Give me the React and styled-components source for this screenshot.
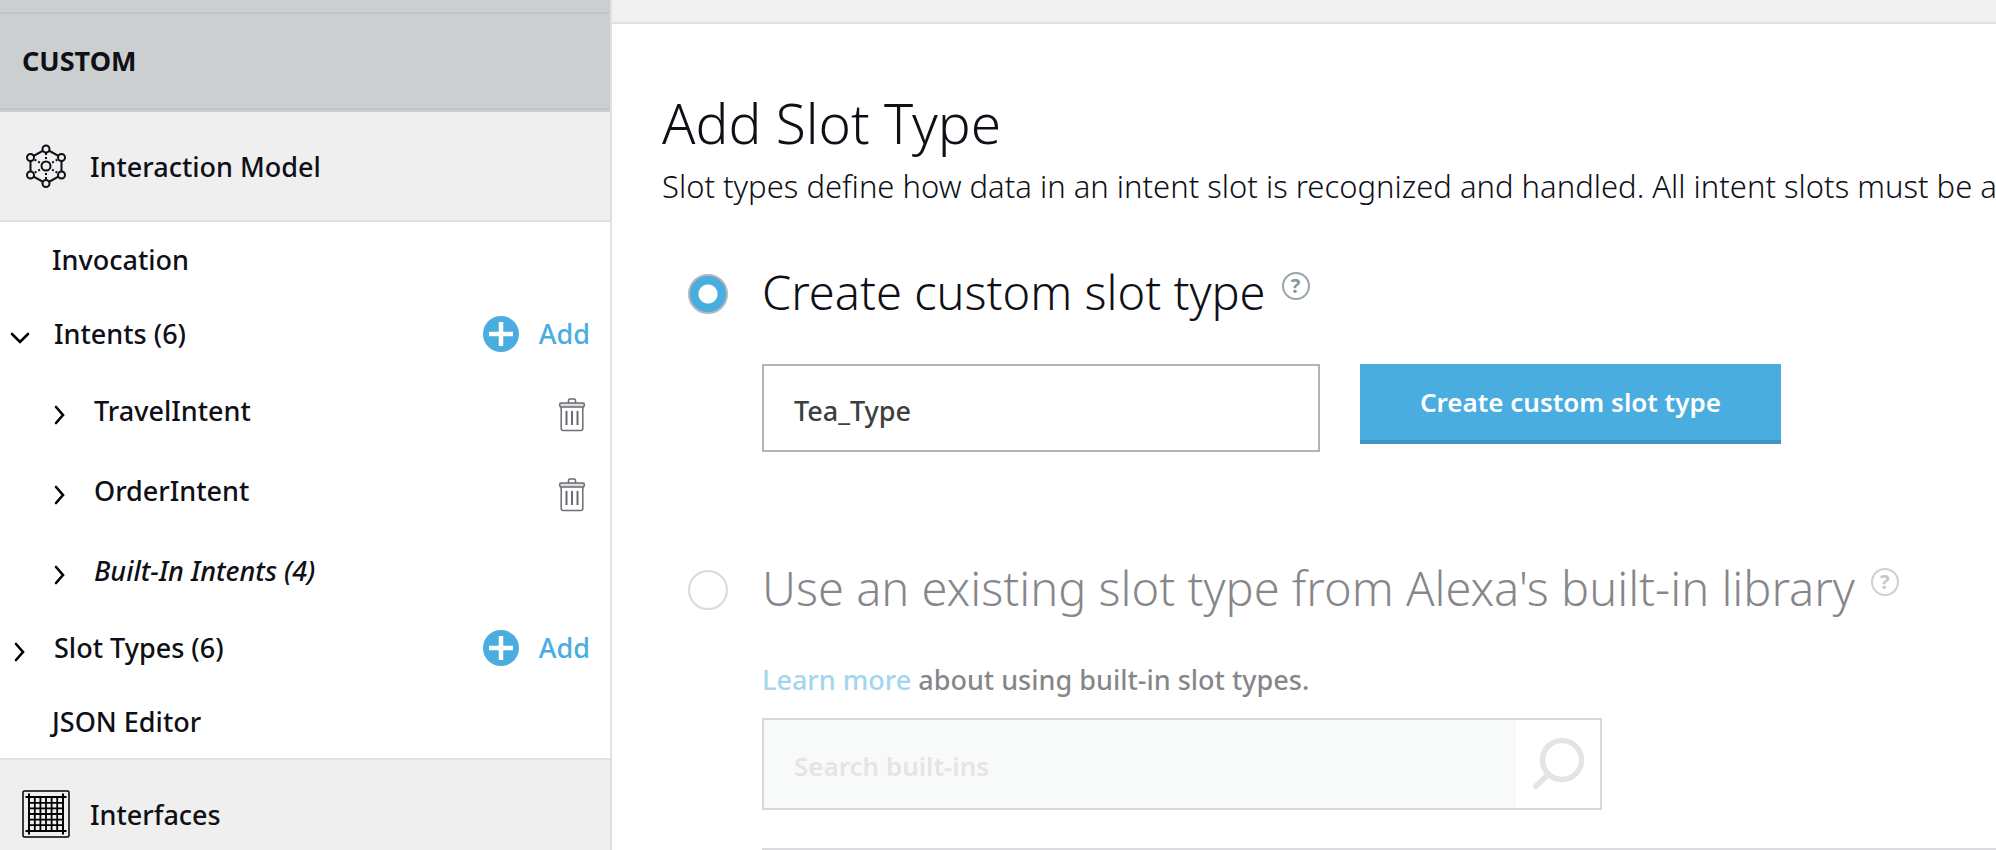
import React, { useState } from "react";
import styled, { createGlobalStyle } from "styled-components";

const blue = "#4aade0";
const ink = "#0f1017";

const GlobalStyle = createGlobalStyle`
  * { box-sizing: border-box; }
  body {
    margin: 0;
    background: #fff;
    color: ${ink};
    font-family: "Noto Sans", "Open Sans", sans-serif;
    font-size: 27px;
    font-weight: 500;
    line-height: 40px;
  }
  button, input { font: inherit; color: inherit; }
  svg { display: block; }
`;

const Page = styled.div`
  display: flex;
  height: 100vh;
  overflow: hidden;
`;

const Sidebar = styled.nav`
  flex: 0 0 612px;
  border-right: 2px solid #e0e0e0;
`;

const SidebarCap = styled.div`
  height: 14px;
  background: #cbcfcf;
  border-bottom: 2px solid #c5c3c6;
`;

const SkillType = styled.div`
  display: flex;
  align-items: center;
  height: 96px;
  padding-left: 22px;
  background: #cbcfcf;
  border-bottom: 2px solid #c5c3c6;
  box-shadow: 0 2px 0 #cbcfcf;
  position: relative;
  font-weight: 700;
`;

const Section = styled.a`
  display: flex;
  align-items: center;
  height: ${(p) => (p.$first ? 112 : 110)}px;
  padding: ${(p) => (p.$first ? "2px" : "0")} 22px 0;
  gap: 20px;
  background: #efefef;
  border: solid #e0e0e0;
  border-width: ${(p) => (p.$first ? "0 0 2px" : "2px 0 0")};
  color: inherit;
  text-decoration: none;
`;

const SectionLabel = styled.span`
  padding-top: 2px;
`;

const IconSlot = styled.span`
  display: flex;
  justify-content: center;
  width: 48px;
`;

const Tree = styled.ul`
  margin: 0;
  padding: 0;
  list-style: none;
`;

const Row = styled.div`
  display: flex;
  align-items: center;
  height: ${(p) => (p.$nested ? 80 : 74)}px;
  padding: 2px 20px 0 ${(p) => (p.$nested ? 40 : 0)}px;
`;

const Toggle = styled.button`
  display: flex;
  justify-content: center;
  width: 40px;
  margin: 8px 14px 0 0;
  padding: 0;
  border: 0;
  background: none;
`;

const RowLink = styled.a`
  flex: 1;
  padding-left: ${(p) => (p.$plain ? 52 : 0)}px;
  color: inherit;
  font-style: ${(p) => (p.$italic ? "italic" : "normal")};
  text-decoration: none;
`;

const AddButton = styled.button`
  display: flex;
  align-items: center;
  gap: 20px;
  padding: 0;
  border: 0;
  background: none;
  color: ${blue};
`;

const DeleteButton = styled.button`
  margin: 8px 5px 0 0;
  padding: 0;
  border: 0;
  background: none;
`;

const Main = styled.main`
  flex: 1;
  min-width: 0;
  overflow: hidden;
`;

const TopStrip = styled.div`
  height: 24px;
  background: #f1f1f1;
  border-bottom: 2px solid #e0e0e0;
`;

const Content = styled.div`
  padding: 66px 0 0 50px;
`;

const Title = styled.h1`
  margin: 0;
  font-size: 55px;
  font-weight: 300;
  line-height: 66px;
`;

const Intro = styled.p`
  margin: 8px 0 54px;
  font-size: 31px;
  font-weight: 300;
  line-height: 44px;
  white-space: nowrap;
`;

const Option = styled.section`
  margin-bottom: 106px;
  padding-left: 26px;
  opacity: ${(p) => (p.$dim ? 0.5 : 1)};
`;

const OptionHead = styled.div`
  display: flex;
  align-items: center;
  height: 60px;
`;

const Radio = styled.input`
  appearance: none;
  flex: none;
  width: 40px;
  height: 40px;
  margin: 4px 34px 0 0;
  border: 2px solid #b4b6bb;
  border-radius: 50%;
  background: #fff;
  &:checked {
    background: radial-gradient(circle, #fff 9px, ${blue} 10px);
  }
`;

const OptionTitle = styled.h2`
  margin: 0;
  font-size: 47px;
  font-weight: 300;
  line-height: 60px;
  white-space: nowrap;
`;

const Help = styled.button`
  align-self: flex-start;
  width: 28px;
  height: 28px;
  margin: 10px 0 0 16px;
  padding: 0;
  border: 2px solid #9aa5a5;
  border-radius: 50%;
  background: none;
  color: #879596;
  font-size: 20px;
  font-weight: 700;
  line-height: 24px;
`;

const OptionBody = styled.div`
  padding: 42px 0 0 74px;
`;

const Fields = styled.div`
  display: flex;
  align-items: flex-start;
  gap: 40px;
`;

const NameInput = styled.input`
  width: 558px;
  height: 88px;
  padding: 4px 30px 0;
  border: 2px solid #aab7b8;
  border-radius: 0;
  background: #fff;
  color: #3a3f40;
`;

const CreateButton = styled.button`
  height: 80px;
  padding: 0 60px;
  border: 0;
  border-bottom: 4px solid #4293bf;
  background: ${blue};
  color: #fff;
  font-size: 26px;
  font-weight: 600;
`;

const Hint = styled.p`
  margin: 0 0 18px;
`;

const HintLink = styled.a`
  color: ${blue};
  text-decoration: none;
`;

const SearchBox = styled.div`
  display: flex;
  max-width: 840px;
  height: 92px;
  margin-bottom: 38px;
  border: 2px solid #aab7b8;
`;

const SearchInput = styled.input`
  flex: 1;
  padding: 4px 30px 0;
  border: 0;
  background: #f3f6f6;
  &::placeholder {
    color: #cbcbcb;
    font-weight: 600;
    font-size: 26px;
    opacity: 1;
  }
`;

const SearchButton = styled.button`
  display: flex;
  align-items: center;
  justify-content: center;
  width: 84px;
  padding: 0;
  border: 0;
  background: #fff;
`;

const Results = styled.div`
  height: 200px;
  border-top: 2px solid #b9b9c0;
`;

function Chevron({ open }) {
  return (
    <svg width="20" height="20" viewBox="0 0 20 20" fill="none" stroke="#000" strokeWidth="2.6">
      <path d={open ? "M2 6l8 8 8-8" : "M6 2l7 8-7 8"} strokeLinecap="round" strokeLinejoin="miter" />
    </svg>
  );
}

function PlusIcon() {
  return (
    <svg width="36" height="36" viewBox="0 0 36 36">
      <circle cx="18" cy="18" r="18" fill={blue} />
      <path d="M18 6v24M6 18h24" stroke="#fff" strokeWidth="4.5" />
    </svg>
  );
}

function TrashIcon() {
  return (
    <svg width="26" height="34" viewBox="0 0 26 34" fill="none" stroke="#6b6b73" strokeWidth="1.5">
      <path d="M9.5 5V2.2Q9.5 1 10.7 1H15.3Q16.5 1 16.5 2.2V5" />
      <rect x="0.8" y="5" width="24.4" height="4" rx="1" fill="#dcdce0" />
      <path d="M2.2 9V30.5Q2.2 32.5 4.2 32.5H21.8Q23.8 32.5 23.8 30.5V9" />
      <path d="M7.5 13v14M13 13v14M18.5 13v14" strokeWidth="2" />
    </svg>
  );
}

const nodes = [[20, 5], [35.5, 13.5], [35.5, 31], [20, 39.5], [4.5, 31], [4.5, 13.5]];

function ModelIcon() {
  return (
    <svg width="40" height="44" viewBox="0 0 40 44" fill="none" stroke={ink} strokeWidth="2">
      <path d={"M" + nodes.map((n) => n.join(" ")).join("L") + "Z"} />
      {nodes.map(([x, y]) => (
        <path key={x + "-" + y} d={`M20 22L${x} ${y}`} strokeDasharray="2 2" strokeDashoffset="1" />
      ))}
      {nodes.map(([x, y]) => (
        <circle key={x + "-" + y} cx={x} cy={y} r="3.5" fill="#efefef" />
      ))}
      <circle cx="20" cy="22" r="4.5" fill="#efefef" />
    </svg>
  );
}

function GridIcon() {
  const lines = [12.8, 18.4, 24, 29.6, 35.2];
  return (
    <svg width="48" height="48" viewBox="0 0 48 48" fill="none" stroke="#000" strokeWidth="2">
      <rect x="1" y="1" width="46" height="46" rx="1.5" strokeWidth="1.5" />
      <path d="M7 3.5v41M41 3.5v41M3.5 7h41M3.5 41h41" />
      {lines.map((v) => (
        <path key={v} d={`M${v} 7v34M7 ${v}h34`} strokeWidth="1.8" />
      ))}
    </svg>
  );
}

function SearchIcon() {
  return (
    <svg width="54" height="54" viewBox="0 0 54 54" fill="none" stroke="#cbcbcb" strokeWidth="5.5">
      <circle cx="31" cy="23" r="19.5" />
      <path d="M17.5 37L3 51" />
    </svg>
  );
}

const tree = [
  { label: "Invocation", plain: true },
  { label: "Intents (6)", open: true, add: true },
  { label: "TravelIntent", nested: true, remove: true },
  { label: "OrderIntent", nested: true, remove: true },
  { label: "Built-In Intents (4)", nested: true, italic: true },
  { label: "Slot Types (6)", add: true },
  { label: "JSON Editor", plain: true },
];

function TreeRow({ item }) {
  return (
    <li>
      <Row $nested={item.nested}>
        {!item.plain && (
          <Toggle type="button" aria-label={`Toggle ${item.label}`} aria-expanded={!!item.open}>
            <Chevron open={item.open} />
          </Toggle>
        )}
        <RowLink href="#" $plain={item.plain} $italic={item.italic}>{item.label}</RowLink>
        {item.add && <AddButton type="button"><PlusIcon />Add</AddButton>}
        {item.remove && (
          <DeleteButton type="button" aria-label={`Delete ${item.label}`}><TrashIcon /></DeleteButton>
        )}
      </Row>
    </li>
  );
}

export default function App() {
  const [mode, setMode] = useState("custom");
  const [name, setName] = useState("Tea_Type");

  return (
    <>
      <GlobalStyle />
      <Page>
        <Sidebar>
          <SidebarCap />
          <SkillType>CUSTOM</SkillType>
          <Section href="#" $first>
            <IconSlot><ModelIcon /></IconSlot>
            <SectionLabel>Interaction Model</SectionLabel>
          </Section>
          <Tree>
            {tree.map((item) => <TreeRow key={item.label} item={item} />)}
          </Tree>
          <Section href="#">
            <IconSlot><GridIcon /></IconSlot>
            <SectionLabel>Interfaces</SectionLabel>
          </Section>
        </Sidebar>
        <Main>
          <TopStrip />
          <Content>
            <Title>Add Slot Type</Title>
            <Intro>
              Slot types define how data in an intent slot is recognized and handled. All intent slots must be a
            </Intro>
            <Option $dim={mode !== "custom"}>
              <OptionHead>
                <Radio
                  type="radio" name="mode" id="mode-custom"
                  checked={mode === "custom"} onChange={() => setMode("custom")}
                />
                <OptionTitle><label htmlFor="mode-custom">Create custom slot type</label></OptionTitle>
                <Help type="button">?</Help>
              </OptionHead>
              <OptionBody>
                <Fields>
                  <NameInput aria-label="Slot type name" value={name} onChange={(e) => setName(e.target.value)} />
                  <CreateButton type="button">Create custom slot type</CreateButton>
                </Fields>
              </OptionBody>
            </Option>
            <Option $dim={mode !== "library"}>
              <OptionHead>
                <Radio
                  type="radio" name="mode" id="mode-library"
                  checked={mode === "library"} onChange={() => setMode("library")}
                />
                <OptionTitle>
                  <label htmlFor="mode-library">Use an existing slot type from Alexa's built-in library</label>
                </OptionTitle>
                <Help type="button">?</Help>
              </OptionHead>
              <OptionBody>
                <Hint><HintLink href="#">Learn more</HintLink> about using built-in slot types.</Hint>
                <SearchBox>
                  <SearchInput aria-label="Search built-ins" placeholder="Search built-ins" />
                  <SearchButton type="button" aria-label="Search"><SearchIcon /></SearchButton>
                </SearchBox>
                <Results />
              </OptionBody>
            </Option>
          </Content>
        </Main>
      </Page>
    </>
  );
}
